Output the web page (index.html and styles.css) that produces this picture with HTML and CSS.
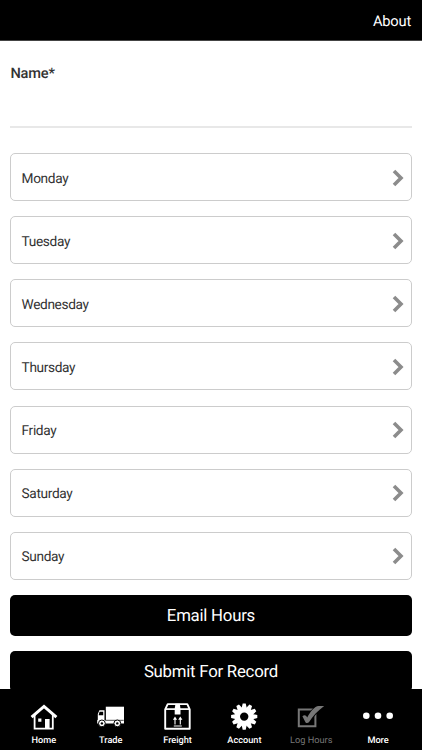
FILE: index.html
```html
<!DOCTYPE html>
<html lang="en">
<head>
    <meta charset="UTF-8">
    <meta name="viewport" content="width=device-width, initial-scale=1.0">
    <title>Log Hours</title>
    <link rel="stylesheet" href="styles.css">
</head>
<body>
    <header class="top-bar">
        <a class="about-link">About</a>
    </header>

    <main class="content">
        <label class="name-label" for="name">Name*</label>
        <input class="name-input" id="name" type="text">

        <div class="day-list">
            <div class="day">Monday <svg class="chevron" viewBox="0 0 12 18"><path d="M2 2l7 7-7 7"/></svg></div>
            <div class="day">Tuesday <svg class="chevron" viewBox="0 0 12 18"><path d="M2 2l7 7-7 7"/></svg></div>
            <div class="day">Wednesday <svg class="chevron" viewBox="0 0 12 18"><path d="M2 2l7 7-7 7"/></svg></div>
            <div class="day">Thursday <svg class="chevron" viewBox="0 0 12 18"><path d="M2 2l7 7-7 7"/></svg></div>
            <div class="day">Friday <svg class="chevron" viewBox="0 0 12 18"><path d="M2 2l7 7-7 7"/></svg></div>
            <div class="day">Saturday <svg class="chevron" viewBox="0 0 12 18"><path d="M2 2l7 7-7 7"/></svg></div>
            <div class="day">Sunday <svg class="chevron" viewBox="0 0 12 18"><path d="M2 2l7 7-7 7"/></svg></div>
        </div>

        <button class="btn">Email Hours</button>
        <button class="btn">Submit For Record</button>
    </main>

    <nav class="tab-bar">
        <a class="tab">
            <svg class="tab-icon" viewBox="0 0 30 30" fill="none" stroke="currentColor">
                <path d="M2.6 15.2L15 4.4l12.4 10.8" stroke-width="3"/>
                <path d="M5.6 13v13.6h18.2V13" stroke-width="1.8"/>
                <path d="M16 17h4.6v9.5H16zM9.2 16.6h3.2v3.2H9.2z" fill="currentColor" stroke="none"/>
            </svg>
            Home
        </a>
        <a class="tab">
            <svg class="tab-icon" viewBox="0 0 30 30" fill="currentColor">
                <path d="M9.8 4.7h18.2v13.3H9.8z"/>
                <path d="M3.4 8.2h5.2v9.8h19.4v3.4H1.2v-3.2l.6-.5V12z"/>
                <path d="M3.5 9.7h3.7v3.6H2.6z" fill="#000"/>
                <path d="M9.2 8v10.3h18.5" fill="none" stroke="#000" stroke-width=".7"/>
                <g stroke="#000" stroke-width="1">
                    <circle cx="5.9" cy="21.4" r="3.4"/>
                    <circle cx="21.3" cy="21.4" r="3.4"/>
                </g>
                <circle cx="5.9" cy="21.4" r="1.2" fill="#000"/>
                <circle cx="21.3" cy="21.4" r="1.2" fill="#000"/>
            </svg>
            Trade
        </a>
        <a class="tab">
            <svg class="tab-icon" viewBox="0 0 30 30" fill="none" stroke="currentColor">
                <path d="M4.7 2.1h19.6l2.4 5.2v19.4H2.2V7.3z" stroke-width="1.9" stroke-linejoin="round"/>
                <path d="M2.5 7.1h24.1" stroke-width="1.7"/>
                <path d="M12.4 1.8h4.4l.7 5.3v5.4h-5.8V7.1z" fill="currentColor" stroke="none"/>
                <path d="M12 22.6v-6M17.3 22.6v-6M10.8 24H18.8" stroke-width="1.1"/>
                <path d="M12 14.5l2.1 3.2H9.9zM17.3 14.5l2.1 3.2h-4.2z" fill="currentColor" stroke="none"/>
            </svg>
            Freight
        </a>
        <a class="tab">
            <svg class="tab-icon" viewBox="0 0 30 30">
                <g transform="translate(15.2 14.6)" fill="currentColor">
                    <g id="teeth">
                        <path d="M-2.7-8l1.2-5.1h3L2.7-8zM-2.7 8l1.2 5.1h3L2.7 8z"/>
                        <path d="M-2.7-8l1.2-5.1h3L2.7-8zM-2.7 8l1.2 5.1h3L2.7 8z" transform="rotate(30)"/>
                        <path d="M-2.7-8l1.2-5.1h3L2.7-8zM-2.7 8l1.2 5.1h3L2.7 8z" transform="rotate(60)"/>
                    </g>
                    <use href="#teeth" transform="rotate(90)"/>
                    <circle r="6.7" fill="none" stroke="currentColor" stroke-width="5"/>
                </g>
            </svg>
            Account
        </a>
        <a class="tab active">
            <svg class="tab-icon" viewBox="0 0 30 30" fill="none" stroke="currentColor">
                <path d="M2.8 7.4h16.6v16.8H2.8z" stroke-width="2"/>
                <path d="M6.4 14.2c2-1.8 3.6-1.2 4.8 1.3C14.4 9.6 18.6 4.2 22.6 4h5.6C21.6 8.8 17 13.8 12.9 20.3c-1.1 1-2.4 1-3.3.2z" fill="currentColor" stroke="#000" stroke-width="1.6" paint-order="stroke"/>
            </svg>
            Log Hours
        </a>
        <a class="tab">
            <svg class="tab-icon" viewBox="0 0 30 30" fill="currentColor">
                <circle cx="3.3" cy="13.8" r="3.3"/>
                <circle cx="15" cy="13.8" r="3.3"/>
                <circle cx="26.7" cy="13.8" r="3.3"/>
            </svg>
            More
        </a>
    </nav>
</body>
</html>
```

FILE: styles.css
```css
* {
    box-sizing: border-box;
}

body {
    font-family: Roboto, sans-serif;
    text-rendering: geometricPrecision;
    background-color: #fff;
    color: #333;
    margin: 0;
    height: 100vh;
    display: flex;
    flex-direction: column;
    overflow: hidden;
}

.top-bar {
    flex: none;
    height: 41px;
    padding: 2px 11px 0;
    background-color: #000;
    border-bottom: 1px solid #444;
    display: flex;
    align-items: center;
    justify-content: flex-end;
}

.about-link {
    color: #fff;
    font-size: 14.7px;
    letter-spacing: -0.2px;
}

.content {
    flex: 1;
    min-height: 0;
    overflow: hidden;
    padding: 23px 10.5px 0 10.4px;
    display: flex;
    flex-direction: column;
}

.name-label {
    flex: none;
    font-size: 14.6px;
    font-weight: 500;
    letter-spacing: -0.15px;
    line-height: 18px;
}

.name-input {
    flex: none;
    height: 46px;
    border: none;
    border-bottom: 2px solid #e8e8e8;
    outline: none;
    padding: 0;
    font-size: 14px;
}

.day-list {
    flex: none;
    display: flex;
    flex-direction: column;
    gap: 15.15px;
    margin: 25px 0 15px;
}

.day {
    height: 48px;
    padding: 3px 7px 0 10.2px;
    border: 1px solid #ccc;
    border-radius: 5px;
    display: flex;
    align-items: center;
    justify-content: space-between;
    font-size: 13.7px;
    letter-spacing: -0.36px;
}

.chevron {
    width: 12px;
    height: 18px;
    margin-bottom: 2px;
    fill: none;
    stroke: #8c8c8c;
    stroke-width: 3.6;
}

.btn {
    flex: none;
    height: 41px;
    margin-bottom: 15px;
    padding: 1px 0 0;
    border: none;
    border-radius: 5px;
    background-color: #000;
    color: #fff;
    font-family: inherit;
    font-size: 16.8px;
    letter-spacing: -0.24px;
    text-rendering: inherit;
}

.tab-bar {
    flex: none;
    height: 61px;
    padding: 13px 10.5px 0;
    background-color: #000;
    display: flex;
}

.tab {
    flex: 1;
    display: flex;
    flex-direction: column;
    align-items: center;
    color: #fff;
    font-size: 9.2px;
    font-weight: 500;
    line-height: 17px;
    white-space: nowrap;
}

.tab.active {
    color: #777;
    font-weight: 400;
}

.tab-icon {
    width: 30px;
    height: 30px;
}
```
